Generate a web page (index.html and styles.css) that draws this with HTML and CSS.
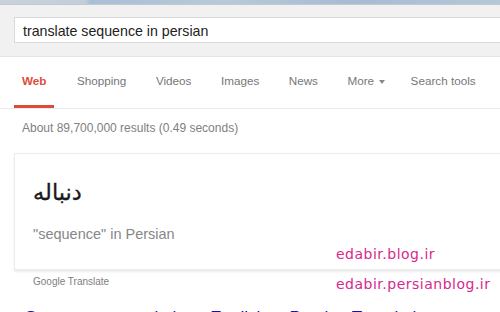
FILE: index.html
```html
<!DOCTYPE html>
<html>
<head>
<meta charset="utf-8">
<link rel="stylesheet" href="styles.css">
</head>
<body>
<div class="chrome"></div>
<header class="top">
  <div class="searchbox">translate sequence in persian</div>
</header>
<nav class="tabs">
  <span class="tab active">Web</span>
  <span class="tab">Shopping</span>
  <span class="tab">Videos</span>
  <span class="tab">Images</span>
  <span class="tab">News</span>
  <span class="tab more">More<i class="caret"></i></span>
  <span class="tab">Search tools</span>
</nav>
<main class="results">
  <div class="stats">About 89,700,000 results (0.49 seconds)</div>
  <section class="card">
    <div class="fa" dir="rtl" lang="fa">دنباله</div>
    <div class="sub">"sequence" in Persian</div>
  </section>
  <div class="source">Google Translate</div>
  <h3 class="title">Sequence - translation - English to Persian Translation</h3>
</main>
<div class="wm wm1">edabir.blog.ir</div>
<div class="wm wm2">edabir.persianblog.ir</div>
</body>
</html>
```
FILE: styles.css
```css
html, body {
  margin: 0;
  padding: 0;
}
body {
  width: 500px;
  height: 312px;
  overflow: hidden;
  position: relative;
  background: #fff;
  font-family: "Liberation Sans", Arial, sans-serif;
}
.chrome {
  height: 4px;
  border-bottom: 1px solid #c4c8cc;
  background: linear-gradient(90deg, #c9d2db 0%, #c2cedb 17%, #a9bfd6 18%, #b8c9db 45%, #a6bcd3 70%, #b5c7da 100%);
}
.top {
  background: #f1f1f1;
  padding: 12px 0 13px 14px;
  border-bottom: 1px solid #e5e5e5;
}
.searchbox {
  box-sizing: border-box;
  width: 520px;
  height: 26px;
  background: #fff;
  border: 1px solid #d9d9d9;
  padding-left: 8px;
  font-size: 14.2px;
  line-height: 26px;
  color: #222;
  white-space: nowrap;
}
.tabs {
  display: flex;
  padding-left: 14px;
  border-bottom: 1px solid #ebebeb;
  gap: 15.5px;
}
.tab {
  display: flex;
  align-items: center;
  height: 48px;
  line-height: 48px;
  padding: 0 7px;
  border-bottom: 3px solid transparent;
  font-size: 11.7px;
  color: #777;
  white-space: nowrap;
}
.tab.active {
  padding: 0 8px;
  color: #dd4b39;
  font-weight: bold;
  border-bottom-color: #dd4b39;
}
.tab.more {
  padding-right: 3px;
}
.caret {
  display: inline-block;
  width: 0;
  height: 0;
  margin-left: 5px;
  margin-top: 1px;
  border-left: 3px solid transparent;
  border-right: 3px solid transparent;
  border-top: 4px solid #888;
}
.results {
  padding: 11px 0 0 14px;
}
.stats {
  padding-left: 8px;
  font-size: 12px;
  line-height: 16px;
  color: #808080;
}
.card {
  box-sizing: border-box;
  width: 520px;
  height: 117px;
  margin-top: 17px;
  padding: 23px 0 0 18px;
  background: #fff;
  border: 1px solid #ececec;
  box-shadow: 0 2px 2px rgba(0, 0, 0, 0.08);
}
.fa {
  font-family: "DejaVu Sans", sans-serif;
  font-size: 22.5px;
  line-height: 30px;
  color: #1a1a1a;
  text-align: left;
  width: max-content;
  -webkit-text-stroke: 0.3px #1a1a1a;
}
.sub {
  margin-top: 17px;
  font-size: 14.5px;
  line-height: 20px;
  color: #878787;
}
.source {
  margin-top: 5px;
  padding-left: 19px;
  font-size: 10px;
  line-height: 14px;
  color: #808080;
}
.title {
  margin: 19px 0 0 0;
  padding-left: 11px;
  font-size: 17px;
  line-height: 20px;
  font-weight: normal;
  color: #1a0dab;
  white-space: nowrap;
}
.wm {
  position: absolute;
  left: 336px;
  font-family: "DejaVu Sans", sans-serif;
  font-size: 14px;
  line-height: 16px;
  letter-spacing: 0.5px;
  color: #d8288c;
  white-space: nowrap;
}
.wm1 { top: 245.5px; }
.wm2 { top: 275.5px; }
```
